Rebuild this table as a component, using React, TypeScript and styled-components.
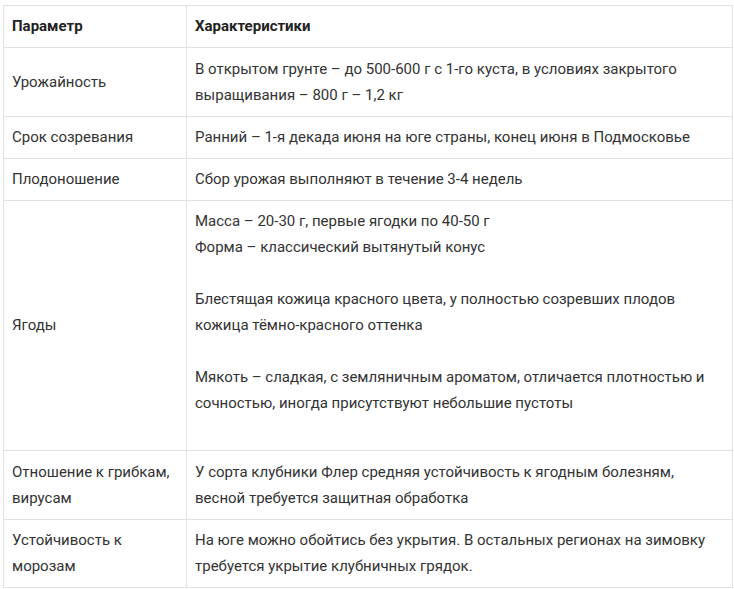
import React from "react";
import styled, { createGlobalStyle } from "styled-components";

const GlobalStyle = createGlobalStyle`
  html, body {
    margin: 0;
    padding: 0;
    background: #fff;
  }
  body {
    font-family: Roboto, "Liberation Sans", Arial, sans-serif;
    color: #333;
  }
`;

const Page = styled.div`
  padding: 5px 1px 0 3px;
`;

const Table = styled.table`
  width: 730px;
  border-collapse: collapse;
  font-size: 15px;
  line-height: 26px;

  th,
  td {
    border: 1px solid #e1e1e1;
    padding: 7.3px 8px 8px;
    vertical-align: middle;
    text-align: left;
  }

  th {
    font-weight: 700;
    color: #222;
  }

  td:first-child,
  th:first-child {
    width: 166px;
  }
`;

const Para = styled.p`
  margin: 0 0 26px;
`;

type Row = { name: string; value: React.ReactNode };

const rows: Row[] = [
  {
    name: "Урожайность",
    value:
      "В открытом грунте – до 500-600 г с 1-го куста, в условиях закрытого выращивания – 800 г – 1,2 кг",
  },
  {
    name: "Срок созревания",
    value: "Ранний – 1-я декада июня на юге страны, конец июня в Подмосковье",
  },
  {
    name: "Плодоношение",
    value: "Сбор урожая выполняют в течение 3-4 недель",
  },
  {
    name: "Ягоды",
    value: (
      <>
        <Para>
          Масса – 20-30 г, первые ягодки по 40-50 г
          <br />
          Форма – классический вытянутый конус
        </Para>
        <Para>
          Блестящая кожица красного цвета, у полностью созревших плодов кожица
          тёмно-красного оттенка
        </Para>
        <Para>
          Мякоть – сладкая, с земляничным ароматом, отличается плотностью и
          сочностью, иногда присутствуют небольшие пустоты
        </Para>
      </>
    ),
  },
  {
    name: "Отношение к грибкам, вирусам",
    value:
      "У сорта клубники Флер средняя устойчивость к ягодным болезням, весной требуется защитная обработка",
  },
  {
    name: "Устойчивость к морозам",
    value:
      "На юге можно обойтись без укрытия. В остальных регионах на зимовку требуется укрытие клубничных грядок.",
  },
];

const App = () => {
  return (
    <>
      <GlobalStyle />
      <Page>
        <Table>
          <thead>
            <tr>
              <th>Параметр</th>
              <th>Характеристики</th>
            </tr>
          </thead>
          <tbody>
            {rows.map((r) => (
              <tr key={r.name}>
                <td>{r.name}</td>
                <td>{r.value}</td>
              </tr>
            ))}
          </tbody>
        </Table>
      </Page>
    </>
  );
};

export default App;
